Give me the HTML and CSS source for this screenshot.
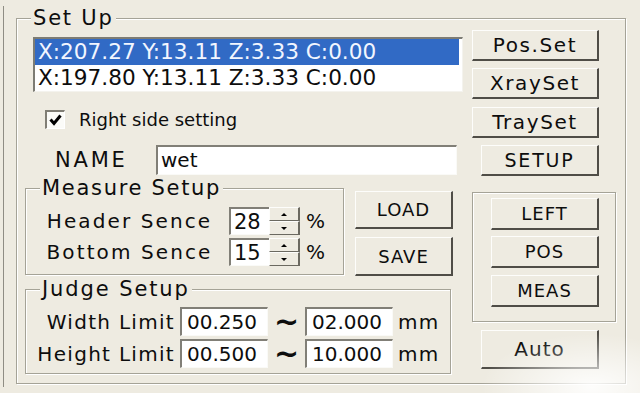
FILE: index.html
```html
<!DOCTYPE html>
<html lang="en">
<head>
  <meta charset="UTF-8">
  <title>Set Up</title>
  <link rel="stylesheet" href="styles.css">
</head>
<body>
  <div class="window">
    <div class="frame">
      <fieldset class="group setup">
        <legend>Set Up</legend>
        <div class="cols">
          <div class="left">
            <div class="listbox">
              <div class="item selected">X:207.27 Y:13.11 Z:3.33 C:0.00</div>
              <div class="item">X:197.80 Y:13.11 Z:3.33 C:0.00</div>
            </div>

            <div class="check-row">
              <span class="checkbox">
                <svg width="13" height="12" viewBox="0 0 13 12"><polyline points="1.5,5.5 5,9.5 11.5,1.5" fill="none" stroke="#000" stroke-width="3"/></svg>
              </span>
              Right side setting
            </div>

            <div class="name-row">
              <span class="name-label">NAME</span>
              <div class="field name-field">wet</div>
            </div>

            <div class="measure-row">
              <fieldset class="group measure">
                <legend>Measure Setup</legend>
                <div class="spin-row">
                  <span class="spin-label">Header Sence</span>
                  <div class="spin">
                    <div class="field spin-field">28</div>
                    <div class="spin-btns"><span class="up"></span><span class="down"></span></div>
                  </div>
                  <span class="pct">%</span>
                </div>
                <div class="spin-row">
                  <span class="spin-label">Bottom Sence</span>
                  <div class="spin">
                    <div class="field spin-field">15</div>
                    <div class="spin-btns"><span class="up"></span><span class="down"></span></div>
                  </div>
                  <span class="pct">%</span>
                </div>
              </fieldset>
              <div class="file-btns">
                <button class="btn load">LOAD</button>
                <button class="btn save">SAVE</button>
              </div>
            </div>

            <fieldset class="group judge">
              <legend>Judge Setup</legend>
              <div class="limit-row">
                <span class="limit-label">Width Limit</span>
                <div class="field limit-field">00.250</div>
                <span class="tilde">~</span>
                <div class="field limit-field">02.000</div>
                <span class="unit">mm</span>
              </div>
              <div class="limit-row">
                <span class="limit-label">Height Limit</span>
                <div class="field limit-field">00.500</div>
                <span class="tilde">~</span>
                <div class="field limit-field">10.000</div>
                <span class="unit">mm</span>
              </div>
            </fieldset>
          </div>

          <div class="right">
            <button class="btn wide">Pos.Set</button>
            <button class="btn wide xray">XraySet</button>
            <button class="btn wide tray">TraySet</button>
            <button class="btn setup-btn">SETUP</button>
            <div class="group side-group">
              <button class="btn side">LEFT</button>
              <button class="btn side">POS</button>
              <button class="btn side">MEAS</button>
            </div>
            <button class="btn auto">Auto</button>
          </div>
        </div>
      </fieldset>
    </div>
    <div class="fade"></div>
  </div>
</body>
</html>
```

FILE: styles.css
```css
body {
  margin: 0;
  background: #eeebe1;
  font-family: "DejaVu Sans", sans-serif;
  color: #0d0d0d;
}

.window {
  width: 640px;
  height: 393px;
  box-sizing: border-box;
  padding: 6px 0 0 3px;
  position: relative;
  overflow: hidden;
}

.frame {
  border-left: 1px solid #8f8d84;
  padding-left: 12px;
  height: 381px;
}

/* etched group box */
.group {
  margin: 0;
  min-width: 0;
  border: 1px solid #a5a397;
  box-shadow: inset 1px 1px #fff, 1px 1px #fff;
}
.group legend {
  background: #eeebe1;
  padding: 0 2px;
  font-size: 21px;
  line-height: 22px;
  letter-spacing: 1.7px;
}

.setup {
  width: 610px;
  box-sizing: border-box;
  padding: 0 9px 9px 8px;
}
.setup > legend {
  margin-left: 6px;
  line-height: 24px;
  letter-spacing: 1.8px;
}

.cols {
  display: flex;
  gap: 9px;
}
.left {
  width: 438px;
  display: flex;
  flex-direction: column;
  align-items: flex-start;
}
.right {
  width: 144px;
  display: flex;
  flex-direction: column;
  align-items: flex-start;
}

/* list box */
.listbox {
  margin: 7px 0 0 8px;
  width: 430px;
  height: 55px;
  box-sizing: border-box;
  background: #fff;
  border-style: solid;
  border-width: 2px 1px 1px 2px;
  border-color: #7d7c74 #f4f3ee #f4f3ee #7d7c74;
  font-size: 21.6px;
}
.item {
  height: 26px;
  line-height: 26px;
  padding-left: 3px;
  margin-right: 3px;
  white-space: nowrap;
}
.item.selected {
  background: #316ac5;
  color: #f2f6ff;
}

/* checkbox */
.check-row {
  margin: 18px 0 0 20px;
  height: 19px;
  display: flex;
  align-items: center;
  gap: 14px;
  font-size: 18px;
}
.checkbox {
  width: 20px;
  height: 19px;
  box-sizing: border-box;
  background: #fbfbf8;
  border-style: solid;
  border-width: 2px 1px 1px 2px;
  border-color: #807e75 #fff #fff #807e75;
  display: flex;
  align-items: center;
  justify-content: center;
}

/* sunken fields */
.field {
  background: #fff;
  box-sizing: border-box;
  border-style: solid;
  border-width: 2px 1px 1px 2px;
  border-color: #817f77 #fafaf7 #fafaf7 #817f77;
  white-space: nowrap;
}

.name-row {
  margin: 16px 0 0 30px;
  height: 30px;
  display: flex;
  align-items: center;
}
.name-label {
  width: 101px;
  font-size: 21px;
  letter-spacing: 2.8px;
}
.name-field {
  width: 301px;
  height: 30px;
  padding-left: 3px;
  font-size: 20px;
  line-height: 27px;
}

/* measure setup */
.measure-row {
  margin-top: 2px;
  display: flex;
  align-items: flex-start;
  gap: 11px;
}
.measure {
  width: 319px;
  box-sizing: border-box;
  padding: 8px 0 8px 16px;
}
.measure legend {
  margin-left: -2px;
}
.spin-row {
  height: 28px;
  display: flex;
  align-items: center;
}
.spin-row + .spin-row {
  margin-top: 3px;
}
.spin-label {
  width: 175px;
  margin-right: 12px;
  text-align: center;
  font-size: 20px;
  letter-spacing: 2.1px;
}
.spin {
  display: flex;
  height: 28px;
}
.spin-field {
  width: 40px;
  height: 28px;
  padding-left: 3px;
  font-size: 21px;
  line-height: 26px;
  border-right: 0;
}
.spin-btns {
  width: 31px;
  display: flex;
  flex-direction: column;
}
.spin-btns span {
  flex: 1;
  display: flex;
  align-items: center;
  justify-content: center;
  border-style: solid;
  border-width: 1px 2px 1px 1px;
  border-color: #fdfdfb #6b6960 #6b6960 #fdfdfb;
}
.spin-btns .up::after,
.spin-btns .down::after {
  content: "";
  border-left: 3px solid transparent;
  border-right: 3px solid transparent;
}
.spin-btns .up::after {
  border-bottom: 3px solid #000;
}
.spin-btns .down::after {
  border-top: 3px solid #000;
}
.pct {
  margin-left: 6px;
  font-size: 20px;
}

/* buttons */
.btn {
  padding: 0;
  box-sizing: border-box;
  background: #eeebe1;
  color: #0d0d0d;
  font-family: "DejaVu Sans", sans-serif;
  font-size: 20px;
  letter-spacing: 1.6px;
  border-style: solid;
  border-width: 1px 2px 2px 1px;
  border-color: #fdfdfb #4f4d47 #4f4d47 #fdfdfb;
}

.file-btns {
  margin-top: 14px;
  display: flex;
  flex-direction: column;
}
.load,
.save {
  width: 98px;
  height: 38px;
  font-size: 18px;
  letter-spacing: 1px;
}
.save {
  margin-top: 8px;
  height: 39px;
}

/* judge setup */
.judge {
  width: 426px;
  margin-top: 2px;
  box-sizing: border-box;
  padding: 7px 0 5px 6px;
}
.judge legend {
  margin-left: 8px;
  letter-spacing: 1.9px;
}
.limit-row {
  height: 29px;
  display: flex;
  align-items: center;
  font-size: 20px;
}
.limit-row + .limit-row {
  margin-top: 3px;
}
.limit-label {
  width: 143px;
  margin-right: 5px;
  text-align: right;
  letter-spacing: 1.3px;
}
.limit-field {
  width: 88px;
  height: 29px;
  padding-left: 5px;
  line-height: 27px;
}
.tilde {
  width: 37px;
  text-align: center;
  font-size: 30px;
  line-height: 29px;
  font-weight: bold;
}
.unit {
  margin-left: 5px;
  letter-spacing: 1.3px;
}

/* right column */
.wide {
  width: 127px;
  height: 31px;
  margin-bottom: 7px;
}
.xray {
  margin-bottom: 8px;
}
.setup-btn {
  width: 118px;
  height: 31px;
  margin-left: 9px;
  font-size: 19px;
  letter-spacing: 1.8px;
}
.side-group {
  width: 144px;
  height: 130px;
  margin-top: 16px;
  box-sizing: border-box;
  padding: 5px 0 0 18px;
  display: flex;
  flex-direction: column;
  align-items: flex-start;
}
.side {
  width: 108px;
  height: 32px;
  font-size: 18px;
  letter-spacing: 1px;
}
.side + .side {
  margin-top: 6px;
}
.side:last-child {
  margin-top: 7px;
}
.auto {
  width: 118px;
  height: 39px;
  margin: 8px 0 0 9px;
  letter-spacing: 1px;
}

/* washed-out corner of the capture */
.fade {
  position: absolute;
  right: 0;
  bottom: 0;
  width: 160px;
  height: 60px;
  background: radial-gradient(ellipse at 70% 90%, rgba(255, 255, 255, 0.9), rgba(255, 255, 255, 0) 70%);
}
```
